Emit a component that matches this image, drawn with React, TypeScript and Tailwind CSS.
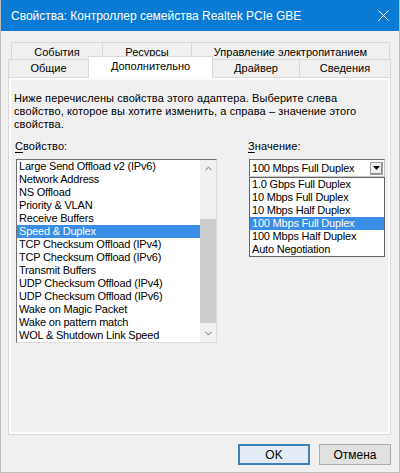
import { ChevronDown, ChevronUp } from 'lucide-react'

const properties = [
  'Large Send Offload v2 (IPv6)',
  'Network Address',
  'NS Offload',
  'Priority & VLAN',
  'Receive Buffers',
  'Speed & Duplex',
  'TCP Checksum Offload (IPv4)',
  'TCP Checksum Offload (IPv6)',
  'Transmit Buffers',
  'UDP Checksum Offload (IPv4)',
  'UDP Checksum Offload (IPv6)',
  'Wake on Magic Packet',
  'Wake on pattern match',
  'WOL & Shutdown Link Speed',
]

const values = [
  '1.0 Gbps Full Duplex',
  '10 Mbps Full Duplex',
  '10 Mbps Half Duplex',
  '100 Mbps Full Duplex',
  '100 Mbps Half Duplex',
  'Auto Negotiation',
]

const topTabs = [
  { label: 'События', w: 'w-[91px]' },
  { label: 'Ресурсы', w: 'w-[89px]' },
  { label: 'Управление электропитанием', w: 'w-[199px]' },
]

const bottomTabs = [
  { label: 'Общие', w: 'w-[80px]', active: false },
  { label: 'Дополнительно', w: 'w-[125px]', active: true },
  { label: 'Драйвер', w: 'w-[86px]', active: false },
  { label: 'Сведения', w: 'w-[92px]', active: false },
]

export default function App() {
  return (
    <div className="h-[473px] w-[400px] overflow-hidden border-x border-b border-[#bdbdbd] bg-[#f0f0f0] font-['Liberation_Sans',Arial,sans-serif] text-[11px] text-black">
      {/* title bar */}
      <div className="flex h-[31px] items-center justify-between bg-[#0a7bd4] px-[10px] text-[12px] text-white">
        <span className="pt-px">Свойства: Контроллер семейства Realtek PCIe GBE</span>
        <svg width="11" height="11" viewBox="0 0 11 11">
          <path d="M0.5 0.5 L10.5 10.5 M10.5 0.5 L0.5 10.5" stroke="white" strokeWidth="1" />
        </svg>
      </div>

      {/* tabs */}
      <div className="mt-[11px] pl-[7px]">
        <div className="ml-[3px] flex h-[17px]">
          {topTabs.map((t, i) => (
            <div
              key={t.label}
              className={`${t.w} flex items-center justify-center border-l border-t border-[#d9d9d9] pt-[3px] leading-[13px] ${i === topTabs.length - 1 ? 'border-r' : ''}`}
            >
              {t.label}
            </div>
          ))}
        </div>
        <div className="flex h-[18px] items-end">
          {bottomTabs.map((t, i) =>
            t.active ? (
              <div
                key={t.label}
                className={`${t.w} relative z-10 -mb-px flex h-[22px] items-start justify-center border-x border-t border-[#d9d9d9] bg-white pt-[3px] leading-[13px]`}
              >
                {t.label}
              </div>
            ) : (
              <div
                key={t.label}
                className={`${t.w} flex h-[18px] items-center justify-center border-t border-[#d9d9d9] bg-[#f0f0f0] leading-[13px] ${i === 0 || i === 3 ? 'border-l' : ''} ${i === bottomTabs.length - 1 ? 'border-r' : ''}`}
              >
                {t.label}
              </div>
            ),
          )}
        </div>

        {/* page */}
        <div className="h-[358px] w-[383px] border border-[#d9d9d9] bg-[#f0f0f0] pl-[4px] pt-[14px] shadow-[inset_0_0_0_2px_#fcfcfc]">
          <p className="pl-px leading-[13px] tracking-[0.1px]">
            Ниже перечислены свойства этого адаптера. Выберите слева
            <br />
            свойство, которое вы хотите изменить, а справа – значение этого
            <br />
            свойства.
          </p>

          <div className="mt-[9px] flex">
            {/* property list */}
            <div className="w-[204px] pl-[3px]">
              <div className="-ml-[1px] leading-[13px] tracking-[0.1px]">
                <span className="underline underline-offset-2">С</span>войство:
              </div>
              <div className="mt-[6px] flex h-[184px] border border-[#6e6e6e] border-b-[#dcdcdc] border-r-[#dcdcdc] bg-white">
                <div className="flex-1 tracking-[-0.2px]">
                  {properties.map((p) => (
                    <div
                      key={p}
                      className={`h-[13px] pl-[2px] leading-[13px] ${p === 'Speed & Duplex' ? 'bg-[#3a8ee6] text-white' : ''}`}
                    >
                      {p}
                    </div>
                  ))}
                </div>
                <div className="flex w-[16px] flex-col bg-[#f0f0f0]">
                  <div className="flex h-[17px] items-center justify-center text-[#606060]">
                    <ChevronUp size={11} strokeWidth={2} />
                  </div>
                  <div className="mt-[42px] h-[104px] bg-[#cdcdcd]" />
                  <div className="flex-1" />
                  <div className="flex h-[17px] items-center justify-center text-[#606060]">
                    <ChevronDown size={11} strokeWidth={2} />
                  </div>
                </div>
              </div>
            </div>

            {/* value combo */}
            <div className="ml-[32px] w-[136px]">
              <div className="-ml-[1px] leading-[13px] tracking-[0.1px]">
                <span className="underline underline-offset-2">З</span>начение:
              </div>
              <div className="mt-[6px] flex h-[18px] items-center border border-[#6e6e6e] border-b-[#c8c8c8] border-r-[#c8c8c8] bg-white pl-[2px] pr-[1px] tracking-[-0.2px]">
                <span className="flex-1 leading-[13px]">100 Mbps Full Duplex</span>
                <div className="flex h-[13px] w-[13px] items-center justify-center border border-[#a0a0a0] bg-[#f0f0f0] shadow-[inset_-1px_-1px_0_#8a8a8a]">
                  <svg width="7" height="4" viewBox="0 0 7 4">
                    <path d="M0 0 H7 L3.5 4 Z" fill="#000" />
                  </svg>
                </div>
              </div>
              <div className="border border-[#646464] bg-white tracking-[-0.2px]">
                {values.map((v) => (
                  <div
                    key={v}
                    className={`h-[13px] pl-[2px] leading-[13px] ${v === '100 Mbps Full Duplex' ? 'bg-[#3a8ee6] text-white' : ''}`}
                  >
                    {v}
                  </div>
                ))}
              </div>
            </div>
          </div>
        </div>
      </div>

      {/* buttons */}
      <div className="mt-[9px] flex justify-end gap-[9px] pr-[8px]">
        <button className="h-[21px] w-[72px] border-2 border-[#3d82b9] bg-[#e3ecf4] text-[12px] leading-none">
          OK
        </button>
        <button className="h-[21px] w-[72px] border border-[#adadad] bg-[#e1e1e1] text-[12px] leading-none">
          Отмена
        </button>
      </div>
    </div>
  )
}
